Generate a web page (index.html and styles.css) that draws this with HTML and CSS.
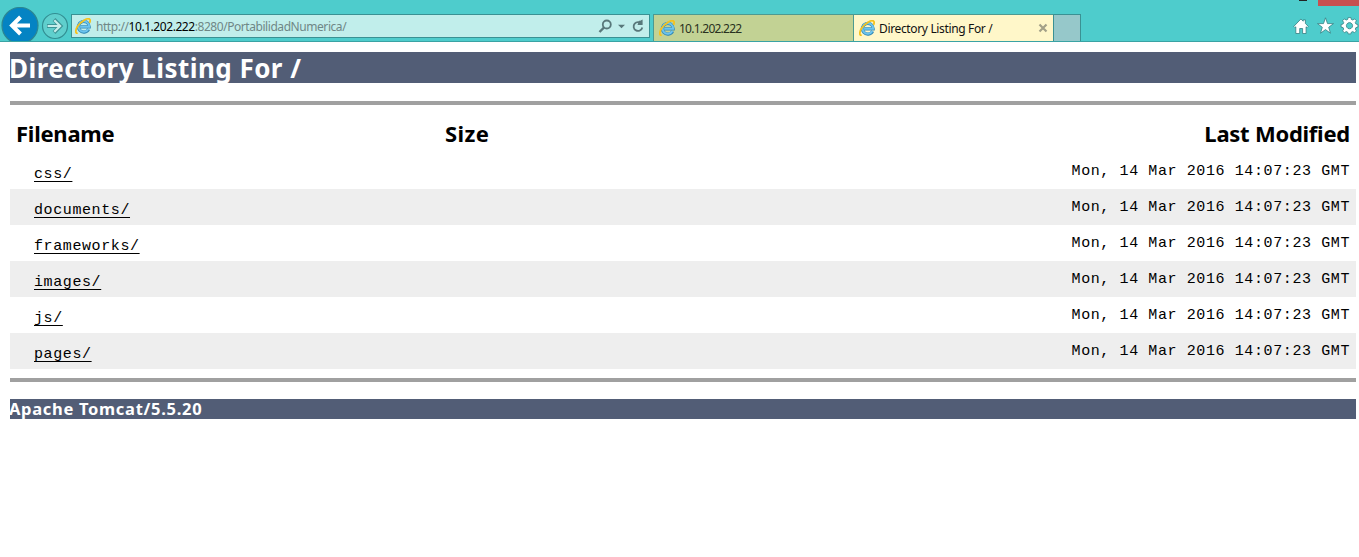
FILE: index.html
```html
<!DOCTYPE html>
<html lang="en">
<head>
<meta charset="utf-8">
<title>Directory Listing For /</title>
<link rel="stylesheet" href="styles.css">
</head>
<body>
<svg class="defs" width="0" height="0" aria-hidden="true">
  <symbol id="ie" viewBox="0 0 16 16">
    <path d="M13.6 11.2A5.4 5.4 0 1 1 14.2 8.8H5.4" fill="none" stroke="#3288b5" stroke-width="3.2"/>
    <path d="M13.4 11.1A5.3 5.3 0 1 1 14.1 8.7H5.4" fill="none" stroke="#6cc4ee" stroke-width="2"/>
    <path d="M2.7 15.1C.2 15.6.2 12 2.6 8.3 5.8 3.4 12.8-.7 14.7 1.3c.7.8.5 2.2-.2 3.6" fill="none" stroke="#f6c21c" stroke-width="1.8"/>
  </symbol>
</svg>
<header class="chrome">
  <svg class="back" width="38" height="34" viewBox="0 0 38 34"><circle cx="19" cy="18.5" r="18" fill="#0483c3" stroke="#2c8692" stroke-width="1.2"/><path d="M29 18.5H11M19.5 10l-8.5 8.5 8.5 8.5" fill="none" stroke="#fff" stroke-width="4"/></svg>
  <svg class="forward" width="28" height="28" viewBox="0 0 28 28"><circle cx="14" cy="14" r="12.5" fill="#5fcfcd" stroke="#328e92" stroke-width="1.2"/><path d="M6 14h13M13 7.5l6.5 6.5-6.5 6.5" fill="none" stroke="#3d9496" stroke-width="4"/><path d="M6.6 14h12M13.3 8.2l5.8 5.8-5.8 5.8" fill="none" stroke="#c5eeeb" stroke-width="2.2"/></svg>
  <div class="address">
    <svg class="ie" width="16" height="16"><use href="#ie"/></svg>
    <span class="url">http://<b>10.1.202.222</b>:8280/PortabilidadNumerica/</span>
    <svg class="tools" width="48" height="16" viewBox="0 0 48 16"><g fill="none" stroke="#58787a" stroke-width="1.8"><circle cx="8.8" cy="6.5" r="4"/><path d="M6 9.5l-4.5 4.5" stroke-width="2.4"/><path d="M43.6 5.9A4.4 4.4 0 1 0 44.3 9.5"/></g><path d="M20 6.8h7l-3.5 3.5zM41 2.7h1.2L44.6 1.5v5.6H39.5z" fill="#58787a"/></svg>
  </div>
  <nav class="tabs">
    <div class="tab"><svg class="ie" width="16" height="16"><use href="#ie"/></svg><span class="ip">10.1.202.222</span></div>
    <div class="tab active"><svg class="ie" width="16" height="16"><use href="#ie"/></svg><span class="name">Directory Listing For /</span><svg class="close" width="10" height="10" viewBox="0 0 10 10"><path d="M1.5 1.5l7 7m0-7l-7 7" stroke="#a3a088" stroke-width="2.2"/></svg></div>
    <div class="newtab"></div>
  </nav>
  <div class="window"><i class="minimize"></i><i class="shut"></i></div>
  <svg class="actions" width="66" height="18" viewBox="0 0 66 18"><g fill="#fff" stroke="#357f82" stroke-width=".8">
    <path d="M.8 9.4L7.9 2l2.3 2.2V2.9h2.2v3.6l2.9 2.9-1.2 1.2-1-.8v6.7H9.6v-5H6.7v5H2.8V9.8l-.9.8z"/>
    <path d="M32.5.8l2 5.8h6l-4.8 3.7 1.8 5.9-5-3.6-5 3.6 1.8-5.9-4.8-3.7h6z"/>
    <path transform="translate(-.6 -.6)" fill-rule="evenodd" d="M55.8 1h2.6l.5 2 1.5.6 1.8-1.1L64 4.3l-1.1 1.8.6 1.5 2 .5v2.6l-2 .5-.6 1.5 1.1 1.8-1.8 1.8-1.8-1.1-1.5.6-.5 1.7h-2.6l-.5-1.7-1.5-.6-1.8 1.1-1.8-1.8 1.1-1.8-.6-1.5-2-.5V8.1l2-.5.6-1.5-1.1-1.8L52 2.5l1.8 1.1 1.5-.6zM57.1 6.2a3.1 3.1 0 1 0 .01 0z"/>
  </g></svg>
</header>
<main class="page">
  <h1><span>Directory Listing For /</span></h1>
  <hr>
  <table>
    <thead><tr><th class="file"><span>Filename</span></th><th class="size"><span>Size</span></th><th class="date"><span>Last Modified</span></th></tr></thead>
    <tbody>
      <tr><td><a>css/</a></td><td></td><td class="date">Mon, 14 Mar 2016 14:07:23 GMT</td></tr>
      <tr><td><a>documents/</a></td><td></td><td class="date">Mon, 14 Mar 2016 14:07:23 GMT</td></tr>
      <tr><td><a>frameworks/</a></td><td></td><td class="date">Mon, 14 Mar 2016 14:07:23 GMT</td></tr>
      <tr><td><a>images/</a></td><td></td><td class="date">Mon, 14 Mar 2016 14:07:23 GMT</td></tr>
      <tr><td><a>js/</a></td><td></td><td class="date">Mon, 14 Mar 2016 14:07:23 GMT</td></tr>
      <tr><td><a>pages/</a></td><td></td><td class="date">Mon, 14 Mar 2016 14:07:23 GMT</td></tr>
    </tbody>
  </table>
  <hr class="bottom">
  <h3><span>Apache Tomcat/5.5.20</span></h3>
</main>
</body>
</html>
```
FILE: styles.css
```css
* { box-sizing: border-box; }
body { margin: 0; background: #fff; color: #000; font-family: "Noto Sans", sans-serif; overflow: hidden; }
svg { display: block; flex: none; }
.defs { position: absolute; }
.chrome { position: relative; display: flex; align-items: flex-start; height: 42px; background: #4ecccc; border-bottom: 1px solid #3aa3a4; }
.back { margin: 7px 0 0 1px; }
.forward { margin: 12px 0 0 2px; }
.address { display: flex; align-items: center; width: 579px; height: 24px; margin: 14px 0 0 2px; padding: 0 3px; background: #c1eeeb; border: 1px solid #3a9193; }
.url { flex: 1; margin-left: 5px; padding-top: 2px; font-size: 12px; line-height: 20px; color: #6f8786; white-space: nowrap; letter-spacing: -.44px; }
.url b { font-weight: 400; color: #000; }
.tabs { display: flex; height: 27px; margin: 14px 0 0 3px; font-size: 12px; }
.tab { display: flex; align-items: center; width: 200px; padding: 0 5px; background: #c2d294; border: solid #4d9a91; border-width: 1px 0 0 1px; white-space: nowrap; color: #293020; }
.tab span { flex: 1; margin-left: 4px; line-height: 18px; padding-top: 2px; }
.tab.active { background: #fff7c9; color: #111; }
.ip { letter-spacing: -.75px; }
.name { letter-spacing: -.35px; }
.newtab { width: 28px; background: #96c8ca; border: 1px solid #3a9193; border-bottom: 0; }
.window { position: absolute; top: 0; right: 0; display: flex; align-items: flex-start; gap: 11px; }
.minimize { width: 8px; height: 1px; background: #222; }
.shut { width: 41px; height: 6px; background: #c75050; }
.actions { margin: 17px 0 0 auto; }
.page { padding: 10px 3px 0 10px; }
h1, h3 { margin: 0; background: #525d76; color: #fff; white-space: nowrap; font-weight: 700; }
h1 { height: 31px; font-size: 26px; line-height: 33px; letter-spacing: .46px; }
h1 span, h3 span { margin-left: -1px; }
h3 { height: 20px; font-size: 16.5px; line-height: 20px; letter-spacing: .7px; }
hr { height: 4px; margin: 18px 0 9px; border: 0; background: #a0a0a0; }
hr.bottom { margin: 9px 0 17px; }
table { width: 100%; border-collapse: collapse; table-layout: fixed; }
th { height: 39px; padding: 0 6px; font-size: 22px; line-height: 38px; text-align: left; vertical-align: top; white-space: nowrap; letter-spacing: -.25px; }
th.file { width: 429px; }
th.size { width: 400px; letter-spacing: .4px; }
th.date, td.date { text-align: right; }
td { height: 36px; padding: 1px 6px 0; font: 15px/35px "Liberation Mono", monospace; letter-spacing: .6px; vertical-align: top; }
td:first-child { padding: 7px 24px 0; line-height: 29px; }
td a { text-decoration: underline; text-underline-offset: 3px; text-decoration-thickness: 1px; text-decoration-skip-ink: none; }
tbody tr:nth-child(even) { background: #eee; }
```
